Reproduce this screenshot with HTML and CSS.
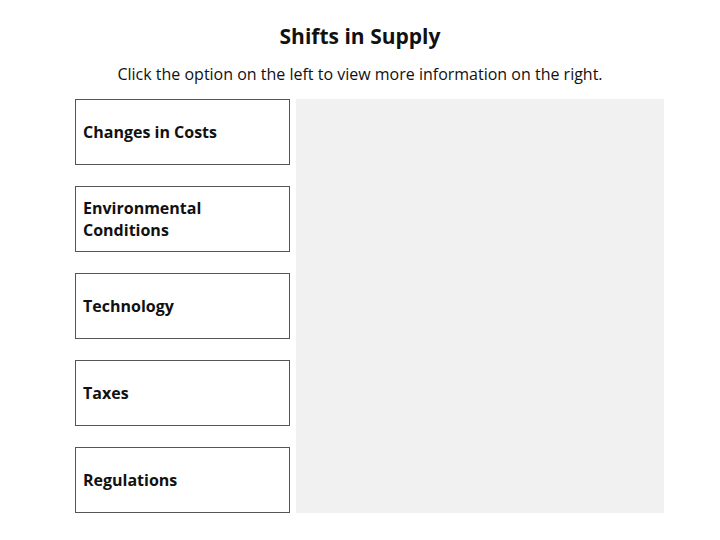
FILE: index.html
```html
<!DOCTYPE html>
<html lang="en">
<head>
    <meta charset="UTF-8">
    <meta name="viewport" content="width=device-width, initial-scale=1.0">
    <title>Shifts in Supply</title>
    <link rel="stylesheet" href="styles.css">
</head>
<body>
    <div class="page">
        <h2 class="title">Shifts in Supply</h2>
        <p class="intro">Click the option on the left to view more information on the right.</p>
        <div class="explorer">
            <div class="options">
                <button class="option">Changes in Costs</button>
                <button class="option">Environmental Conditions</button>
                <button class="option">Technology</button>
                <button class="option">Taxes</button>
                <button class="option">Regulations</button>
            </div>
            <div class="panel"></div>
        </div>
    </div>
</body>
</html>
```

FILE: styles.css
```css
body {
    margin: 0;
    background: #fff;
    font-family: "Open Sans", "Liberation Sans", sans-serif;
    color: #111;
}
.page {
    padding-top: 21px;
}
.title {
    margin: 0;
    text-align: center;
    font-size: 21px;
    font-weight: 700;
    line-height: 30px;
}
.intro {
    margin: 12px 0 0;
    text-align: center;
    font-size: 16px;
    line-height: 22px;
}
.explorer {
    display: flex;
    gap: 6px;
    margin: 14px 0 0 75px;
    width: 589px;
}
.options {
    display: flex;
    flex-direction: column;
    gap: 21px;
    width: 215px;
    flex-shrink: 0;
}
.option {
    height: 66px;
    padding: 0 40px 0 7px;
    border: 1px solid #555;
    background: #fff;
    font-family: inherit;
    font-size: 16px;
    font-weight: 700;
    line-height: 22px;
    color: #111;
    text-align: left;
    cursor: pointer;
}
.panel {
    flex: 1;
    background: #f1f1f1;
}
```
